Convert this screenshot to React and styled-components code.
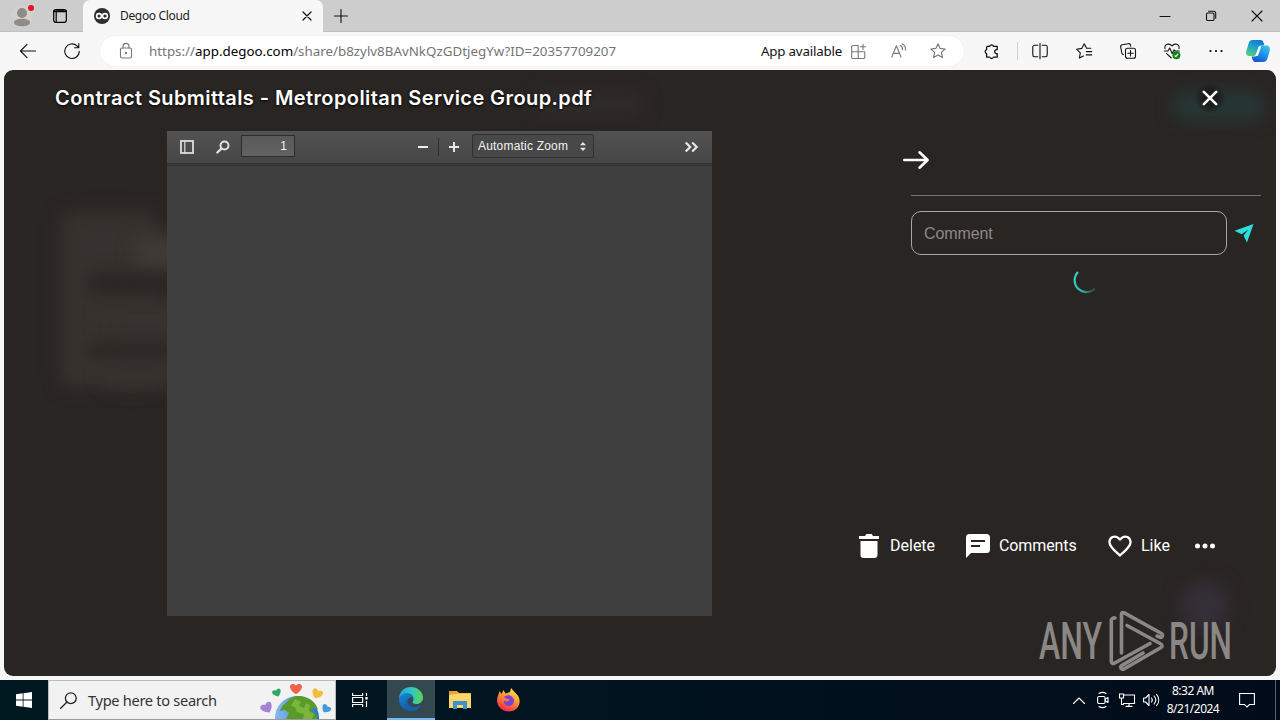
import React from 'react';
import styled, { createGlobalStyle } from 'styled-components';
import { MdFavoriteBorder } from 'react-icons/md';

const GlobalStyle = createGlobalStyle`
  * {
    box-sizing: border-box;
  }
  body {
    margin: 0;
    overflow: hidden;
    font-family: 'Noto Sans', 'Open Sans', sans-serif;
  }
  svg {
    display: block;
    flex: none;
    overflow: visible;
  }
`

const Screen = styled.div`
  display: flex;
  flex-direction: column;
  width: 1280px;
  height: 720px;
  background: #f7f7f7;
`
const Cell = styled.div`
  display: flex;
  flex: none;
  align-items: center;
  justify-content: center;
  width: ${(props) => props.$w}px;
  height: 100%;
`
const Spacer = styled.div`
  flex: 1;
`

/* browser chrome */
const TabBar = styled.div`
  display: flex;
  height: 32px;
  padding-left: 3px;
  background: #cdcdcd;
  border-bottom: 1px solid #c0c0c0;
`
const Tab = styled.div`
  display: flex;
  align-items: center;
  width: 240px;
  height: 32px;
  margin-left: 4px;
  padding-left: 11px;
  border-radius: 7px 7px 0 0;
  background: #f7f7f7;
`
const TabTitle = styled.div`
  flex: 1;
  padding-left: 10px;
  font-size: 12px;
  line-height: 32px;
  letter-spacing: -0.33px;
  color: #1b1b1b;
`
const Toolbar = styled.div`
  display: flex;
  height: 38px;
  padding-left: 6px;
  background: #f7f7f7;
`
const AddressBar = styled.div`
  display: flex;
  align-items: center;
  gap: 8px;
  width: 864px;
  height: 30px;
  margin: 4px 5px 0 6px;
  padding: 0 10px 0 12px;
  border-radius: 15px;
  background: #fff;
  box-shadow: 0 0 1px #ddd;
`
const Url = styled.div`
  flex: 1;
  padding-left: 1px;
  font-size: 13.33px;
  letter-spacing: 0.01px;
  color: #757575;

  b {
    font-weight: 400;
    color: #000;
  }
`
const AppLabel = styled.div`
  margin-right: -8px;
  font-size: 13.33px;
  letter-spacing: -0.2px;
  color: #111;
`
const Divider = styled.div`
  width: 5px;
  height: 18px;
  margin-top: 10px;
  border-right: 1px solid #d0d0d0;
`

/* page */
const Page = styled.main`
  position: relative;
  flex: none;
  width: 1272px;
  height: 606px;
  margin: 0 4px 4px;
  overflow: hidden;
  border-radius: 9px;
  background: #292523;
`
const Ghost = styled.div`
  position: absolute;
  left: ${(props) => props.$x}px;
  top: ${(props) => props.$y}px;
  width: ${(props) => props.$w}px;
  height: ${(props) => props.$h}px;
  border-radius: ${(props) => props.$r || 12}px;
  background: ${(props) => props.$c};
  filter: blur(${(props) => props.$blur || 9}px);
`
const Overlay = styled.div`
  position: relative;
`
const TitleRow = styled.header`
  display: flex;
  align-items: center;
  justify-content: space-between;
  height: 56px;
  margin-bottom: 5px;
  padding: 0 50px 0 51px;
`
const FileName = styled.h1`
  margin: 0;
  font-family: Inter, sans-serif;
  font-size: 20px;
  font-weight: 600;
  line-height: 24px;
  letter-spacing: 0.41px;
  white-space: nowrap;
  color: #fff;
  text-shadow: 0 1px 3px #000;
`
const CloseButton = styled.div`
  display: flex;
  align-items: center;
  justify-content: center;
  width: 32px;
  height: 32px;
  border-radius: 50%;
  background: radial-gradient(#1b1b1b 30%, transparent 70%);
`
const Body = styled.div`
  display: flex;
  justify-content: space-between;
  padding-left: 163px;
`
const PdfViewer = styled.section`
  width: 545px;
  height: 485px;
  background: #404040;
  font-family: 'Liberation Sans', Arial, sans-serif;
  font-size: 12px;
  color: #f2f2f2;
`
const PdfToolbar = styled.div`
  display: flex;
  align-items: center;
  height: 33px;
  padding-left: 1px;
  border-bottom: 1px solid #333;
  background: linear-gradient(#525252, #464646);
  box-shadow: 0 1px 0 #3a3a3a, 0 2px 1px #333;
`
const PageInput = styled.div`
  width: 54px;
  height: 22px;
  margin: 0 114px 2px 2px;
  padding-right: 7px;
  border: 1px solid #2d2d2d;
  background: linear-gradient(#5a5a5a, #626262);
  line-height: 20px;
  text-align: right;
`
const ZoomSplit = styled.div`
  width: 1px;
  height: 18px;
  background: #2c2c2c;
`
const ZoomSelect = styled.div`
  display: flex;
  align-items: center;
  justify-content: space-between;
  width: 122px;
  height: 24px;
  margin: 0 78px 2px 4px;
  padding: 0 7px 0 5px;
  border: 1px solid #303030;
  border-radius: 2px;
  background: #484848;
  letter-spacing: 0.2px;
`
const SidePanel = styled.aside`
  display: flex;
  flex-direction: column;
  justify-content: space-between;
  width: 421px;
  height: 430px;
`
const Comments = styled.div`
  display: flex;
  flex-direction: column;
  padding: 16px 15px 0 56px;
`
const PanelArrow = styled.div`
  height: 48px;
  margin-left: -8px;
  padding-top: 4px;
`
const CommentRow = styled.div`
  display: flex;
  align-items: center;
  gap: 8px;
  padding-top: 15px;
  border-top: 1px solid #77726f;
`
const CommentInput = styled.div`
  width: 316px;
  height: 44px;
  padding-left: 12px;
  border: 1px solid #a9a5a2;
  border-radius: 10px;
  font-family: 'Liberation Sans', Arial, sans-serif;
  font-size: 16px;
  line-height: 43px;
  letter-spacing: -0.1px;
  color: #8e8986;
`
const Loader = styled.div`
  display: flex;
  justify-content: center;
  padding: 15px 3px 0 0;
`
const Actions = styled.div`
  display: flex;
  align-items: center;
  height: 30px;
  padding-left: 4px;
`
const Action = styled.div`
  display: flex;
  align-items: center;
  gap: ${(props) => props.$gap || 10}px;
  width: ${(props) => props.$w}px;
  font-family: Roboto, sans-serif;
  font-size: 16px;
  letter-spacing: ${(props) => props.$ls || 0}px;
  white-space: nowrap;
  color: #fff;
`
const ActionLabel = styled.span`
  padding-bottom: 1px;
`
const Watermark = styled.svg`
  position: absolute;
  left: 1035px;
  top: 540px;
`

/* windows taskbar */
const Taskbar = styled.footer`
  display: flex;
  height: 40px;
  background: linear-gradient(90deg, #001820, #01141f 45%, #020b1a);
  color: #fff;
`
const SearchBox = styled.div`
  display: flex;
  align-items: center;
  width: 288px;
  height: 40px;
  padding: 0 4px 0 11px;
  border: 1px solid #b9bcbd;
  border-bottom-color: #999;
  background: #f2f2f2;
  overflow: hidden;
`
const SearchText = styled.div`
  flex: 1;
  padding-left: 11px;
  font-size: 14.67px;
  letter-spacing: -0.33px;
  color: #333;
`
const TaskItem = styled(Cell)`
  padding-right: ${(props) => props.$shift || 0}px;
  background: ${(props) => (props.$active ? '#34484f' : 'transparent')};
  border-bottom: ${(props) => (props.$active ? '2px solid #76b9ed' : 'none')};
`
const Clock = styled.div`
  width: 60px;
  margin-right: 1px;
  padding-top: 2px;
  font-size: 12px;
  line-height: 18px;
  letter-spacing: -0.5px;
  text-align: center;
  white-space: nowrap;
`
const ShowDesktop = styled.div`
  width: 5px;
  margin-left: 5px;
  border-left: 1px solid #59606d;
`

const Line = ({ w = 16, h = w, color = '#111', sw = 1.1, children }) => (
  <svg
    width={w}
    height={h}
    viewBox={`0 0 ${w} ${h}`}
    fill="none"
    stroke={color}
    strokeWidth={sw}
    strokeLinecap="round"
    strokeLinejoin="round"
  >
    {children}
  </svg>
)

const TabStrip = () => (
  <TabBar>
    <Cell $w={38}>
      <svg width="24" height="24" viewBox="0 0 24 24">
        <circle cx="12" cy="12" r="11" fill="#d3d0ce" />
        <circle cx="12" cy="9" r="5" fill="#8e8b89" />
        <path d="M4 18.5c0-5 16-5 16 0 0 5-16 5-16 0z" fill="#8e8b89" />
        <circle cx="21" cy="4" r="3" fill="#e81123" />
      </svg>
    </Cell>
    <Cell $w={38}>
      <Line w={14} h={14} sw={1.2} color="#000">
        <rect x="0.7" y="0.7" width="12.6" height="12.6" rx="2" />
        <path d="M1 2.2h12" strokeWidth="2" />
        <path d="M3.2 3v10" />
      </Line>
    </Cell>
    <Tab>
      <svg width="16" height="16" viewBox="0 0 16 16">
        <circle cx="8" cy="8" r="8" fill="#2b2f33" />
        <g fill="none" stroke="#fff" strokeWidth="1.6">
          <circle cx="5" cy="8" r="2.4" />
          <circle cx="11" cy="8" r="2.4" />
        </g>
      </svg>
      <TabTitle>Degoo Cloud</TabTitle>
      <Cell $w={32}>
        <Line w={8} sw={1.2}><path d="M0 0l8 8M8 0L0 8" /></Line>
      </Cell>
    </Tab>
    <Cell $w={36}>
      <Line w={14}><path d="M7 .5v13M.5 7h13" /></Line>
    </Cell>
    <Spacer />
    <Cell $w={46}>
      <Line w={10}><path d="M0 5.5h10" /></Line>
    </Cell>
    <Cell $w={46}>
      <Line w={10}>
        <rect x="0.5" y="2" width="7.5" height="7.5" rx="1.3" />
        <path d="M2.5.3h5.2a2 2 0 0 1 2 2v5" />
      </Line>
    </Cell>
    <Cell $w={46}>
      <Line w={10}><path d="M0 0l10 10M10 0L0 10" /></Line>
    </Cell>
  </TabBar>
)

const starPath = 'M8 .8l2.1 4.6 5 .6-3.7 3.4 1 5L8 11.9l-4.4 2.5 1-5L.9 6l5-.6z'

const BrowserToolbar = () => (
  <Toolbar>
    <Cell $w={44}>
      <Line><path d="M15.5 8H.6M7 1.4L.5 8 7 14.6" /></Line>
    </Cell>
    <Cell $w={44}>
      <Line>
        <path d="M15.3 8.3A7.3 7.3 0 1 1 13 2.9l1.6 1.6M14.8.6v4.2h-4.2" />
      </Line>
    </Cell>
    <AddressBar>
      <Cell $w={28}>
        <Line w={12} h={16} color="#777">
          <rect x="0.5" y="5" width="11" height="10" rx="1.5" />
          <path d="M3 5V3.4a3 3 0 0 1 6 0V5" />
          <circle cx="6" cy="10" r="0.6" fill="#777" />
        </Line>
      </Cell>
      <Url>
        https://<b>app.degoo.com</b>/share/b8zylv8BAvNkQzGDtjegYw?ID=20357709207
      </Url>
      <AppLabel>App available</AppLabel>
      <Cell $w={32}>
        <Line w={15} color="#777">
          <path d="M7.2 1.5H2A1.3 1.3 0 0 0 .7 2.8v10.4a1.3 1.3 0 0 0 1.3 1.3h10.5a1.3 1.3 0 0 0 1.3-1.3V7.8H.7M7.2 1.5v13M12 .2v5.2M9.4 2.8h5.2" />
        </Line>
      </Cell>
      <Cell $w={32}>
        <Line color="#777">
          <path d="M1.8 14L6.4 2.8 11 14M3.3 10.4h6.2M10.2 2.6a4 4 0 0 1 2.3 4M12 .7a6 6 0 0 1 3.4 6.4" />
        </Line>
      </Cell>
      <Cell $w={32}>
        <Line color="#777"><path d={starPath} /></Line>
      </Cell>
    </AddressBar>
    <Cell $w={44}>
      <Line w={15} sw={1.3}>
        <path d="M3.4 2.3h2.300a2 2 0 0 1 3.800 0h3.700v3.300h-1.100a2.100 2.100 0 0 0 0 4h1.100v3.500H9.500a2 2 0 0 1-3.800 0H2.600V9.600a2.100 2.100 0 0 1 0-4V3.100z" />
      </Line>
    </Cell>
    <Divider />
    <Cell $w={44}>
      <Line w={16}>
        <path d="M5.800 2.300H2.500a1.700 1.700 0 0 0-1.700 1.700v8a1.700 1.700 0 0 0 1.700 1.700h3.300M10.200 2.300h3.300a1.700 1.700 0 0 1 1.700 1.700v8a1.700 1.700 0 0 1-1.700 1.700h-3.300M8 .3v15.400" />
      </Line>
    </Cell>
    <Cell $w={44}>
      <Line>
        <path d="M14.800 5.300h-4.200L8.200.8 5.800 5.400.6 6.200l3.700 3.600-.9 5.200 4-2.100M10.300 8.600h5.400M10.300 11.900h5.400" />
      </Line>
    </Cell>
    <Cell $w={44}>
      <Line>
        <rect x="5.500" y="5.300" width="10" height="10" rx="2" />
        <path d="M10.500 7.600v5.400M7.800 10.300h5.400M3.400 11.700A2 2 0 0 1 1.800 10L.7 4.100a2 2 0 0 1 1.600-2.300l6-1.100a2 2 0 0 1 2.300 1.600l.1.800" />
      </Line>
    </Cell>
    <Cell $w={44}>
      <Line>
        <path d="M1 5.600C.2 1.200 5.300-.5 8 3c2.700-3.500 7.800-1.800 7 2.600M.3 8h3.600l1.800-3 2.500 5.400 2-3.600.9 1.200h4.200M2.400 10.400L7.300 15" />
        <circle cx="12.400" cy="12.300" r="4" fill="#13801b" stroke="none" />
        <path d="M10.800 12.800l1 .8 2.100-2.500" stroke="#fff" />
      </Line>
    </Cell>
    <Cell $w={44}>
      <svg width="14" height="4" viewBox="0 0 14 4">
        <circle cx="1.500" cy="2" r="1.100" />
        <circle cx="7" cy="2" r="1.100" />
        <circle cx="12.500" cy="2" r="1.100" />
      </svg>
    </Cell>
    <Cell $w={40}>
      <svg width="24" height="22" viewBox="0 0 24 22">
        <defs>
          <linearGradient id="copilotA" x1="0.7" y1="0" x2="0.2" y2="1">
            <stop offset="0" stopColor="#1674d1" />
            <stop offset="0.45" stopColor="#19a5cf" />
            <stop offset="1" stopColor="#58cf75" />
          </linearGradient>
          <linearGradient id="copilotB" x1="0.8" y1="0" x2="0.2" y2="1">
            <stop offset="0" stopColor="#36c3ef" />
            <stop offset="0.6" stopColor="#1684e2" />
            <stop offset="1" stopColor="#1b50cc" />
          </linearGradient>
        </defs>
        <path d="M6.500 0h8c2 0 2.600 1.200 3.200 3.200l.7 2.300h-3c-2 0-2.800 1.200-3.300 3l-1.400 4.700C10 15.600 8.600 16 7 16H3.500C.6 16-.4 13.600.2 11.400L2.600 3.500C3.300 1.200 4.300 0 6.500 0z" fill="url(#copilotA)" />
        <path d="M17.500 22h-8c-2 0-2.600-1.200-3.200-3.200l-.7-2.300h3c2 0 2.800-1.200 3.300-3l1.400-4.700C14 6.400 15.400 5.500 17 5.500h3.500c2.900 0 3.900 2.400 3.300 5.100l-2.400 7.900c-.7 2.300-1.700 3.500-3.900 3.500z" fill="url(#copilotB)" />
        <path d="M12.800 6.500h2.400l-3.200 9.300H9.200z" fill="#f7f7f7" />
      </svg>
    </Cell>
  </Toolbar>
)

const Pdf = () => (
  <PdfViewer>
    <PdfToolbar>
      <Cell $w={38}>
        <Line w={14} h={14} color="#ddd" sw={1.8}>
          <rect x="1" y="1" width="12" height="12" strokeLinejoin="miter" />
          <path d="M4.800 1v12" strokeWidth="1.200" />
        </Line>
      </Cell>
      <Cell $w={33}>
        <Line w={14} h={14} color="#e2e2e2" sw={2}>
          <circle cx="8.500" cy="5.500" r="4" />
          <path d="M5.400 8.600L1.300 12.500" strokeWidth="2.300" />
        </Line>
      </Cell>
      <PageInput>1</PageInput>
      <Cell $w={27}>
        <Line w={10} color="#eee" sw={2}><path d="M0 5h10" strokeLinecap="butt" /></Line>
      </Cell>
      <Spacer />
      <ZoomSplit />
      <Cell $w={29}>
        <Line w={10} color="#e6e6e6" sw={2}><path d="M0 5h10M5 0v10" strokeLinecap="butt" /></Line>
      </Cell>
      <ZoomSelect>
        Automatic Zoom
        <svg width="6" height="9" viewBox="0 0 6 9" fill="#e6e6e6">
          <path d="M3 0l3 3.300H0zM3 9l3-3.300H0z" />
        </svg>
      </ZoomSelect>
      <Cell $w={40}>
        <Line w={14} h={10} color="#e6e6e6" sw={2.2}>
          <path d="M.7.5L5.200 5 .7 9.500M7.200.5L11.700 5 7.200 9.500" strokeLinecap="butt" strokeLinejoin="miter" />
        </Line>
      </Cell>
    </PdfToolbar>
  </PdfViewer>
)

const Side = () => (
  <SidePanel>
    <Comments>
      <PanelArrow>
        <Line w={26} h={18} color="#fff" sw={2.6}>
          <path d="M1.300 9h23M16.500 1.300L24.600 9l-8.100 7.700" />
        </Line>
      </PanelArrow>
      <CommentRow>
        <CommentInput>Comment</CommentInput>
        <svg width="19" height="19" viewBox="0 0 19 19" fill="#2be0dc">
          <path d="M-.5 6.800L18.500 0 12 18.500 8.600 11.600 13.300 5.800 6.500 10.300z" />
        </svg>
      </CommentRow>
      <Loader>
        <svg width="24" height="24" viewBox="0 0 24 24">
          <defs>
            <linearGradient id="loader" x1="0" y1="0.2" x2="1" y2="0.9">
              <stop offset="0" stopColor="#35cdc5" />
              <stop offset="0.55" stopColor="#35b5ae" />
              <stop offset="1" stopColor="#35b5ae" stopOpacity="0.2" />
            </linearGradient>
          </defs>
          <path d="M5 2A11 11 0 0 0 22 18.500" fill="none" stroke="url(#loader)" strokeWidth="2.2" />
        </svg>
      </Loader>
    </Comments>
    <Actions>
      <Action $w={107} $gap={11}>
        <svg width="20" height="24" viewBox="0 0 20 24" fill="#fff">
          <path d="M0 2h6l1.300-2h5.400L14 2h6v3H0zM1.500 7h17v13.500a3 3 0 0 1-3 3.500h-11a3 3 0 0 1-3-3z" />
        </svg>
        <ActionLabel>Delete</ActionLabel>
      </Action>
      <Action $w={140} $ls={-0.1} $gap={9}>
        <svg width="24" height="24" viewBox="0 0 24 24">
          <path d="M3.500 0h17a3.500 3.500 0 0 1 3.500 3.500V15.500a3.500 3.500 0 0 1-3.500 3.500H5L0 24V3.500A3.500 3.500 0 0 1 3.500 0z" fill="#fff" />
          <path d="M5 7h14M5 12h9" stroke="#292523" strokeWidth="2" />
        </svg>
        <ActionLabel>Comments</ActionLabel>
      </Action>
      <Action $w={89} $gap={7}>
        <MdFavoriteBorder size={28} />
        <ActionLabel>Like</ActionLabel>
      </Action>
      <svg width="20" height="6" viewBox="0 0 20 6" fill="#fff">
        <circle cx="2.500" cy="3" r="2.500" />
        <circle cx="10" cy="3" r="2.500" />
        <circle cx="17.500" cy="3" r="2.500" />
      </svg>
    </Actions>
  </SidePanel>
)

const AnyRun = () => (
  <Watermark width="192" height="62" viewBox="0 0 192 62">
    <g fill="#8b8785" fontFamily="Roboto, sans-serif" fontSize="52" fontWeight="500">
      <text x="0" y="49" textLength="63" lengthAdjust="spacingAndGlyphs">ANY</text>
      <text x="130" y="49" textLength="63" lengthAdjust="spacingAndGlyphs">RUN</text>
    </g>
    <g fill="none" stroke="#8b8785" strokeWidth="3.6" strokeLinejoin="round" strokeLinecap="round">
      <path d="M82.500 43V4a1.500 1.500 0 0 1 2.300-1.300L122.500 23.500a2 2 0 0 1-2 3.500L118 26" />
      <path d="M76 8a3 3 0 0 0-3.700 2v41.500a2 2 0 0 0 3 1.700L111 33.500" />
      <path d="M88 15.500L122 34a2 2 0 0 1 0 3.500L85 59a2 2 0 0 1-2.300-3.400L104 43" />
    </g>
  </Watermark>
)

const SearchArt = () => (
  <svg width="70" height="38" viewBox="0 0 70 38">
    <defs>
      <linearGradient id="globe">
        <stop offset="0" stopColor="#86b9f0" />
        <stop offset="1" stopColor="#2679c8" />
      </linearGradient>
      <path id="heart" d="M0 4.500C-9-1-4.500-7 0-3 4.500-7 9-1 0 4.500z" />
    </defs>
    <circle cx="36" cy="37" r="22" fill="url(#globe)" />
    <path d="M26 21c4-6 12-7 18-5 7 2 11 7 13 12l-5-1-2 3 6 4v4H25l3-6-4-3-5 1c1-4 4-7 7-9z" fill="#5a9a28" />
    <path d="M34 18l6 3-2 4 5 2 2-5 4 2-1 6 5 3-2 5h-9l1-5-7-2-2-5-4-1z" fill="#7bb53c" />
    <use href="#heart" transform="translate(35 8) scale(1.150)" fill="#ef634d" />
    <use href="#heart" transform="translate(16 12) rotate(-22) scale(.85)" fill="#35a568" />
    <use href="#heart" transform="translate(56 13) rotate(25) scale(1.050)" fill="#f5bb39" />
    <use href="#heart" transform="translate(6 27) rotate(-30) scale(1.150)" fill="#a681d4" />
    <use href="#heart" transform="translate(65 28) rotate(35) scale(.9)" fill="#429bdc" />
  </svg>
)

const WindowsTaskbar = () => (
  <Taskbar>
    <Cell $w={48}>
      <svg width="16" height="16" viewBox="0 0 16 16" fill="#fff">
        <path d="M0 2.200L6.700 1.300V7.600H0zM7.500 1.200L16 0v7.600H7.500zM0 8.400h6.700v6.300L0 13.800zM7.500 8.400H16V16l-8.500-1.200z" />
      </svg>
    </Cell>
    <SearchBox>
      <Line w={17} color="#222" sw={1.3}>
        <circle cx="10.800" cy="6.200" r="5.400" />
        <path d="M7 10L.7 16.300" />
      </Line>
      <SearchText>Type here to search</SearchText>
      <SearchArt />
    </SearchBox>
    <TaskItem $w={51} $shift={3}>
      <Line w={16} color="#fff" sw={1.2}>
        <path d="M.6 1v2.500h10V1M.6 15v-2.500h10V15M.6 5.500h10v5H.6zM14.500 1v3M14.500 9v6" strokeLinecap="butt" />
        <path d="M13.300 5h2.400v2.500h-2.400z" fill="#fff" stroke="none" />
      </Line>
    </TaskItem>
    <TaskItem $w={48} $active>
      <svg width="24" height="24" viewBox="0 0 24 24">
        <defs>
          <linearGradient id="edgeTop">
            <stop offset="0" stopColor="#23a5de" />
            <stop offset="0.5" stopColor="#30c4cb" />
            <stop offset="1" stopColor="#5cd64b" />
          </linearGradient>
          <linearGradient id="edgeLow" x1="0" y1="0" x2="0.5" y2="1">
            <stop offset="0" stopColor="#1788d4" />
            <stop offset="1" stopColor="#0f59a5" />
          </linearGradient>
        </defs>
        <path d="M0 12C0 4.500 5.500 0 12 0s12 5 12 10.500c0 4-3 6.500-6.500 6.500-4 0-4.500-1.800-3.500-3 1-1.500 1-6-4.500-6C5 8 1 10 0 12z" fill="url(#edgeTop)" />
        <path d="M0 12c.5-3.500 4-6 8-6 4.500 0 6.500 3 6.300 5-3-2-6 .5-6 4 0 4.500 5.200 7.500 13.700 3.300C20 22 16 24 12 24 5 24 0 18.500 0 12z" fill="url(#edgeLow)" />
        <path d="M9 11.500c-2 6 3 11.500 12.500 7-2 4-6 5.500-9.500 5.500C6 22 5 15 9 11.500z" fill="#1a5fae" />
      </svg>
    </TaskItem>
    <TaskItem $w={49}>
      <svg width="22" height="20" viewBox="0 0 22 20">
        <path d="M0 1h8l2 2h12v4H0z" fill="#e6a52c" />
        <path d="M0 5l9-1.500h13V18H0z" fill="#fcd667" />
        <path d="M4 19v-8h14v8h-4v-4H8v4z" fill="#3f8fd2" />
      </svg>
    </TaskItem>
    <TaskItem $w={49}>
      <svg width="23" height="24" viewBox="0 0 23 24">
        <defs>
          <linearGradient id="fox" x1="0.8" y1="0" x2="0.3" y2="1">
            <stop offset="0" stopColor="#fff04a" />
            <stop offset="0.45" stopColor="#ff9633" />
            <stop offset="1" stopColor="#f5224f" />
          </linearGradient>
        </defs>
        <path d="M2.500 3l2 3 2-4 2 3.500L13 4l1-4 3.500 4L20 6.500C22 9 23 11 22.500 15c-.8 5-5.500 8.500-11 8.500S0 19 0 12.500C0 9 1.500 7 2.500 3z" fill="url(#fox)" />
        <path d="M7 9c3-3 9-2 10 3 .5 3-2 6-5.500 6C8 18 6 14 7 13l4 .5 1.500-2L9 10.500z" fill="#7943d5" />
      </svg>
    </TaskItem>
    <Spacer />
    <Cell $w={24}>
      <Line w={12} h={7} color="#fff"><path d="M.5 6.500L6 1l5.500 5.500" /></Line>
    </Cell>
    <Cell $w={24}>
      <Line w={12} h={16} color="#fff">
        <rect x="0.6" y="4.500" width="7.500" height="7" rx="1.500" />
        <path d="M8 7.300l3-1.800v5L8 8.700M2 1.500c2-1.300 5-1.300 7 0M2 14.500c2 1.300 5 1.300 7 0" />
      </Line>
    </Cell>
    <Cell $w={24}>
      <Line w={16} h={14} color="#fff">
        <path d="M5 2h10.500v8.500H4.500M10 10.500V13M7 13.400h6M.5 1h4v4h-4zM2.500 5v6.500h2" strokeLinejoin="miter" />
      </Line>
    </Cell>
    <Cell $w={24}>
      <Line w={16} h={14} color="#fff">
        <path d="M.6 5h2L6 1.500v11L2.600 9h-2zM8.500 5c1 1.200 1 2.800 0 4M11 3c2.200 2.400 2.200 5.600 0 8M13.500 1.300c3 3.500 3 8 0 11.400" />
      </Line>
    </Cell>
    <Clock>
      8:32 AM
      <br />
      8/21/2024
    </Clock>
    <Cell $w={46}>
      <Line w={16} h={16} color="#fff">
        <path d="M.6 1.500h14.800v11H10.500L8 15l-2.500-2.500H.6z" strokeLinejoin="miter" />
      </Line>
    </Cell>
    <ShowDesktop />
  </Taskbar>
)

const App = () => {
  return (
    <>
      <GlobalStyle />
      <Screen>
        <TabStrip />
        <BrowserToolbar />
        <Page>
          <Ghost $x={56} $y={142} $w={98} $h={175} $c="#37322f" />
          <Ghost $x={132} $y={165} $w={50} $h={40} $c="#403b38" />
          <Ghost $x={100} $y={225} $w={80} $h={92} $c="#37322f" />
          <Ghost $x={82} $y={202} $w={90} $h={22} $c="#2a2624" $blur={8} />
          <Ghost $x={82} $y={272} $w={90} $h={16} $c="#2b2725" $blur={7} />
          <Ghost $x={530} $y={22} $w={110} $h={24} $c="#302c2a" />
          <Ghost $x={1168} $y={20} $w={94} $h={32} $c="#263634" $r={16} $blur={8} />
          <Ghost $x={1176} $y={511} $w={50} $h={50} $c="#352f38" $r={25} />
          <Overlay>
            <TitleRow>
              <FileName>Contract Submittals - Metropolitan Service Group.pdf</FileName>
              <CloseButton>
                <Line w={14} color="#fff" sw={2.6}><path d="M.8.8l12.400 12.400M13.200.8L.8 13.200" /></Line>
              </CloseButton>
            </TitleRow>
            <Body>
              <Pdf />
              <Side />
            </Body>
          </Overlay>
          <AnyRun />
        </Page>
        <WindowsTaskbar />
      </Screen>
    </>
  );
}

export default App;
